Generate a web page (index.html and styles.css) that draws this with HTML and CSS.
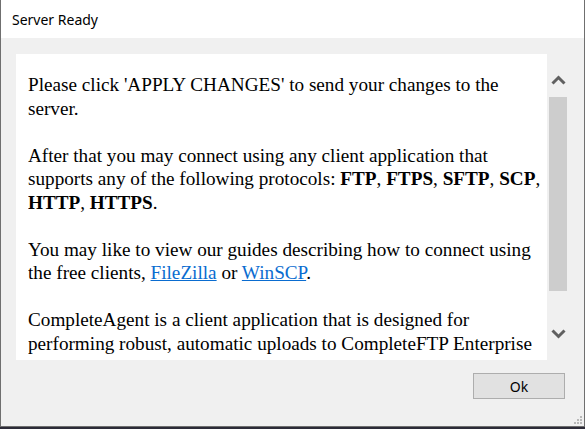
FILE: index.html
```html
<!DOCTYPE html>
<html>
<head>
<meta charset="utf-8">
<link rel="stylesheet" href="styles.css">
</head>
<body>
<div class="window">
  <div class="titlebar">Server Ready</div>
  <div class="client">
    <div class="content-row">
      <div class="panel">
        <div class="doc">
          <p>Please click 'APPLY CHANGES' to send your changes to the server.</p>
          <p>After that you may connect using any client application that supports any of the following protocols: <b>FTP</b>, <b>FTPS</b>, <b>SFTP</b>, <b>SCP</b>, <b>HTTP</b>, <b>HTTPS</b>.</p>
          <p>You may like to view our guides describing how to connect using the free clients, <a href="#">FileZilla</a> or <a href="#">WinSCP</a>.</p>
          <p>CompleteAgent is a client application that is designed for performing robust, automatic uploads to CompleteFTP Enterprise servers. It runs as a Windows service and monitors folders for new or changed files.</p>
        </div>
      </div>
      <div class="scrollbar">
        <div class="sb-btn sb-up">
          <svg width="15" height="11" viewBox="0 0 15 11"><path d="M1.5 8.5 L7.5 2.5 L13.5 8.5" fill="none" stroke="#606060" stroke-width="3"/></svg>
        </div>
        <div class="sb-thumb"></div>
        <div class="sb-track"></div>
        <div class="sb-btn sb-down">
          <svg width="15" height="11" viewBox="0 0 15 11"><path d="M1.5 2.5 L7.5 8.5 L13.5 2.5" fill="none" stroke="#606060" stroke-width="3"/></svg>
        </div>
      </div>
    </div>
    <div class="footer">
      <button class="btn">Ok</button>
    </div>
    <div class="grip">
      <span></span><span></span><span></span><span></span><span></span><span></span>
    </div>
  </div>
</div>
<div class="desktop"></div>
</body>
</html>
```
FILE: styles.css
```css
html, body {
  margin: 0;
  padding: 0;
  background: #2c2b38;
}
.window {
  width: 583px;
  height: 426px;
  border-left: 1px solid #6f6f6f;
  border-right: 1px solid #6f6f6f;
  border-bottom: 1px solid #6f6f6f;
  display: flex;
  flex-direction: column;
  background: #f0f0f0;
}
.titlebar {
  height: 38px;
  background: #ffffff;
  display: flex;
  align-items: center;
  padding-left: 11px;
  font-family: "Noto Sans", "Open Sans", sans-serif;
  font-size: 14px;
  color: #000;
}
.client {
  flex: 1;
  position: relative;
  padding: 16px 0 0 15px;
}
.content-row {
  display: flex;
  height: 306px;
}
.panel {
  width: 531px;
  box-sizing: border-box;
  background: #fff;
  padding: 0 1px 0 12px;
  font-family: "Liberation Serif", "Times New Roman", serif;
  font-size: 19.2px;
  line-height: 23.5px;
  color: #000;
}
.doc {
  height: 302px;
  overflow: hidden;
}
.doc p {
  margin: 23.5px 0;
}
.doc p:first-child {
  margin-top: 19px;
}
.doc a {
  color: #0a6cd0;
  text-decoration: underline;
}
.scrollbar {
  width: 20px;
  margin-left: 1px;
  display: flex;
  flex-direction: column;
  align-items: center;
}
.sb-btn {
  width: 20px;
  display: flex;
  justify-content: center;
}
.sb-up {
  padding-top: 21px;
  padding-bottom: 11px;
}
.sb-down {
  padding-top: 11px;
  padding-bottom: 21px;
}
.sb-btn svg {
  display: block;
}
.sb-thumb {
  width: 18px;
  height: 194px;
  background: #cdcdcd;
}
.sb-track {
  flex: 1;
}
.footer {
  display: flex;
  justify-content: flex-end;
  padding: 13px 19px 0 0;
}
.btn {
  width: 92px;
  height: 26px;
  background: #e1e1e1;
  border: 1px solid #adadad;
  font-family: "Noto Sans", "Open Sans", sans-serif;
  font-size: 14px;
  color: #000;
  padding: 0;
}
.grip {
  position: absolute;
  right: 2px;
  bottom: 2px;
  width: 9px;
  height: 9px;
}
.grip span {
  position: absolute;
  width: 2px;
  height: 2px;
  background: #b8b8b8;
}
.grip span:nth-child(1) { right: 0; bottom: 0; }
.grip span:nth-child(2) { right: 3px; bottom: 0; }
.grip span:nth-child(3) { right: 6px; bottom: 0; }
.grip span:nth-child(4) { right: 0; bottom: 3px; }
.grip span:nth-child(5) { right: 3px; bottom: 3px; }
.grip span:nth-child(6) { right: 0; bottom: 6px; }
.desktop {
  height: 2px;
}
```
